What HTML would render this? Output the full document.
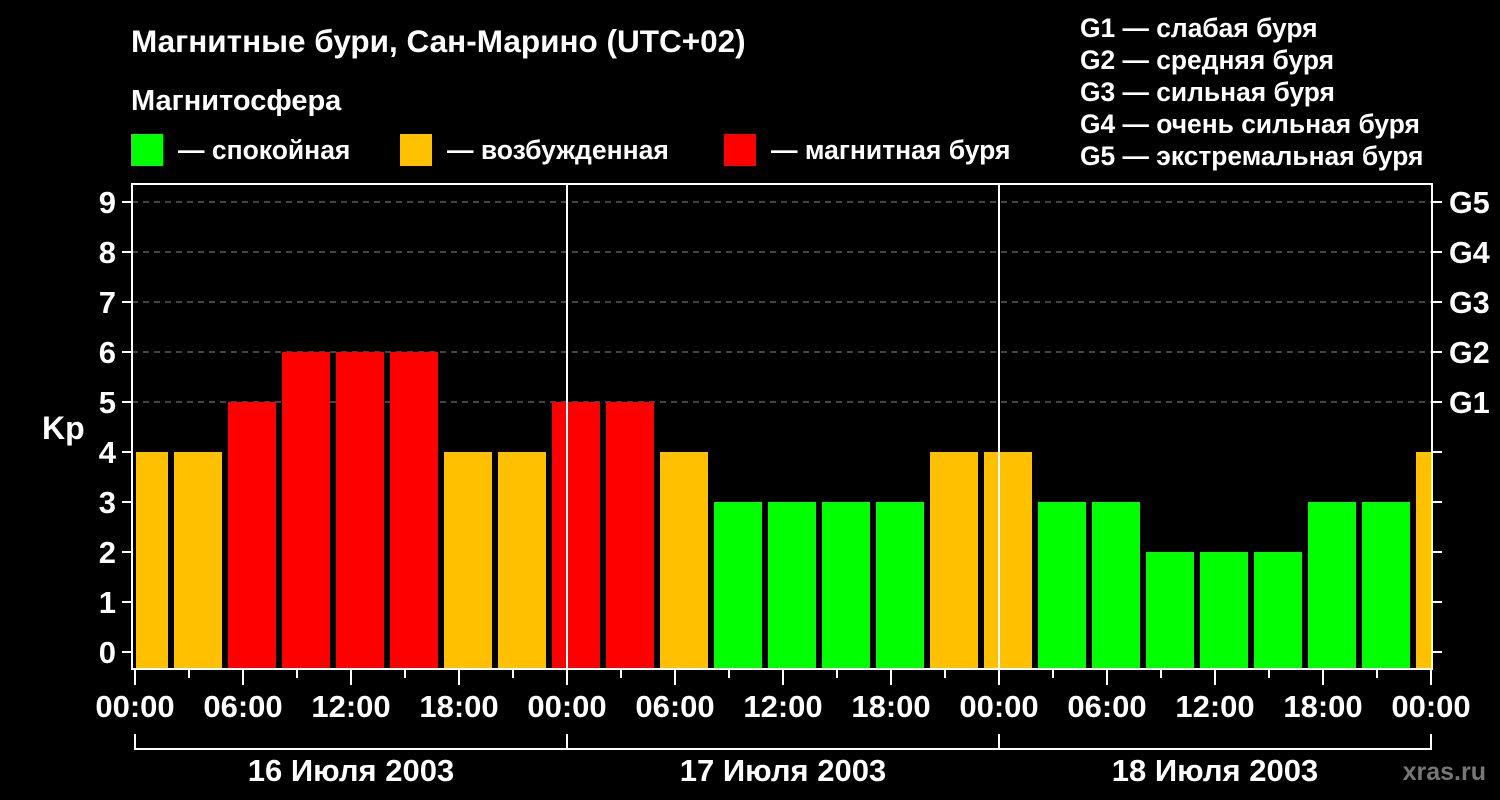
<!DOCTYPE html>
<html><head><meta charset="utf-8"><style>
html,body{margin:0;padding:0;background:#000;width:1500px;height:800px;overflow:hidden}
svg{display:block}
text{font-family:"Liberation Sans",sans-serif;font-weight:bold;fill:#fff}
</style></head><body>
<svg width="1500" height="800" xmlns="http://www.w3.org/2000/svg">
<rect width="1500" height="800" fill="#000"/>
<text x="131" y="52" font-size="31.5">Магнитные бури, Сан-Марино (UTC+02)</text>
<text x="131" y="110" font-size="29">Магнитосфера</text>
<rect x="131" y="134" width="32" height="32" fill="#00ff00"/>
<text x="178" y="159" font-size="26.5">— спокойная</text>
<rect x="400" y="134" width="32" height="32" fill="#ffc000"/>
<text x="447" y="159" font-size="26.5">— возбужденная</text>
<rect x="724" y="134" width="32" height="32" fill="#ff0000"/>
<text x="771" y="159" font-size="26.5">— магнитная буря</text>
<g font-size="26.4">
<text x="1080" y="37">G1 — слабая буря</text>
<text x="1080" y="69">G2 — средняя буря</text>
<text x="1080" y="101">G3 — сильная буря</text>
<text x="1080" y="133">G4 — очень сильная буря</text>
<text x="1080" y="165">G5 — экстремальная буря</text>
</g>
<g stroke="#888" stroke-width="1" stroke-dasharray="6,5">
<line x1="132" y1="202" x2="1432" y2="202"/>
<line x1="132" y1="252" x2="1432" y2="252"/>
<line x1="132" y1="302" x2="1432" y2="302"/>
<line x1="132" y1="352" x2="1432" y2="352"/>
<line x1="132" y1="402" x2="1432" y2="402"/>
</g>
<g>
<rect x="136" y="452" width="32" height="216" fill="#ffc000"/>
<rect x="174" y="452" width="48" height="216" fill="#ffc000"/>
<rect x="228" y="402" width="48" height="266" fill="#ff0000"/>
<rect x="282" y="352" width="48" height="316" fill="#ff0000"/>
<rect x="336" y="352" width="48" height="316" fill="#ff0000"/>
<rect x="390" y="352" width="48" height="316" fill="#ff0000"/>
<rect x="444" y="452" width="48" height="216" fill="#ffc000"/>
<rect x="498" y="452" width="48" height="216" fill="#ffc000"/>
<rect x="552" y="402" width="48" height="266" fill="#ff0000"/>
<rect x="606" y="402" width="48" height="266" fill="#ff0000"/>
<rect x="660" y="452" width="48" height="216" fill="#ffc000"/>
<rect x="714" y="502" width="48" height="166" fill="#00ff00"/>
<rect x="768" y="502" width="48" height="166" fill="#00ff00"/>
<rect x="822" y="502" width="48" height="166" fill="#00ff00"/>
<rect x="876" y="502" width="48" height="166" fill="#00ff00"/>
<rect x="930" y="452" width="48" height="216" fill="#ffc000"/>
<rect x="984" y="452" width="48" height="216" fill="#ffc000"/>
<rect x="1038" y="502" width="48" height="166" fill="#00ff00"/>
<rect x="1092" y="502" width="48" height="166" fill="#00ff00"/>
<rect x="1146" y="552" width="48" height="116" fill="#00ff00"/>
<rect x="1200" y="552" width="48" height="116" fill="#00ff00"/>
<rect x="1254" y="552" width="48" height="116" fill="#00ff00"/>
<rect x="1308" y="502" width="48" height="166" fill="#00ff00"/>
<rect x="1362" y="502" width="48" height="166" fill="#00ff00"/>
<rect x="1416" y="452" width="15" height="216" fill="#ffc000"/>
</g>
<g stroke="#fff" stroke-width="2" fill="none">
<rect x="132" y="184" width="1300" height="485"/>
<line x1="567" y1="184" x2="567" y2="669"/>
<line x1="999" y1="184" x2="999" y2="669"/>
</g>
<g stroke="#fff" stroke-width="2">
<line x1="122" y1="202" x2="132" y2="202"/><line x1="122" y1="252" x2="132" y2="252"/>
<line x1="122" y1="302" x2="132" y2="302"/><line x1="122" y1="352" x2="132" y2="352"/>
<line x1="122" y1="402" x2="132" y2="402"/><line x1="122" y1="452" x2="132" y2="452"/>
<line x1="122" y1="502" x2="132" y2="502"/><line x1="122" y1="552" x2="132" y2="552"/>
<line x1="122" y1="602" x2="132" y2="602"/><line x1="122" y1="652" x2="132" y2="652"/>
<line x1="1432" y1="202" x2="1442" y2="202"/><line x1="1432" y1="252" x2="1442" y2="252"/>
<line x1="1432" y1="302" x2="1442" y2="302"/><line x1="1432" y1="352" x2="1442" y2="352"/>
<line x1="1432" y1="402" x2="1442" y2="402"/><line x1="1432" y1="452" x2="1442" y2="452"/>
<line x1="1432" y1="502" x2="1442" y2="502"/><line x1="1432" y1="552" x2="1442" y2="552"/>
<line x1="1432" y1="602" x2="1442" y2="602"/><line x1="1432" y1="652" x2="1442" y2="652"/>
</g>
<g stroke="#fff" stroke-width="2">
<line x1="135" y1="670" x2="135" y2="685"/><line x1="189" y1="670" x2="189" y2="678"/>
<line x1="243" y1="670" x2="243" y2="685"/><line x1="297" y1="670" x2="297" y2="678"/>
<line x1="351" y1="670" x2="351" y2="685"/><line x1="405" y1="670" x2="405" y2="678"/>
<line x1="459" y1="670" x2="459" y2="685"/><line x1="513" y1="670" x2="513" y2="678"/>
<line x1="567" y1="670" x2="567" y2="685"/><line x1="621" y1="670" x2="621" y2="678"/>
<line x1="675" y1="670" x2="675" y2="685"/><line x1="729" y1="670" x2="729" y2="678"/>
<line x1="783" y1="670" x2="783" y2="685"/><line x1="837" y1="670" x2="837" y2="678"/>
<line x1="891" y1="670" x2="891" y2="685"/><line x1="945" y1="670" x2="945" y2="678"/>
<line x1="999" y1="670" x2="999" y2="685"/><line x1="1053" y1="670" x2="1053" y2="678"/>
<line x1="1107" y1="670" x2="1107" y2="685"/><line x1="1161" y1="670" x2="1161" y2="678"/>
<line x1="1215" y1="670" x2="1215" y2="685"/><line x1="1269" y1="670" x2="1269" y2="678"/>
<line x1="1323" y1="670" x2="1323" y2="685"/><line x1="1377" y1="670" x2="1377" y2="678"/>
<line x1="1431" y1="670" x2="1431" y2="685"/>
<polyline points="135,734 135,749 1431,749 1431,734" fill="none"/>
<line x1="567" y1="734" x2="567" y2="749"/>
<line x1="999" y1="734" x2="999" y2="749"/>
</g>
<g font-size="31" text-anchor="end">
<text x="116" y="213">9</text><text x="116" y="263">8</text><text x="116" y="313">7</text>
<text x="116" y="363">6</text><text x="116" y="413">5</text><text x="116" y="463">4</text>
<text x="116" y="513">3</text><text x="116" y="563">2</text><text x="116" y="613">1</text>
<text x="116" y="663">0</text>
</g>
<text x="42" y="439" font-size="32">Kp</text>
<g font-size="30.5">
<text x="1449" y="213">G5</text><text x="1449" y="263">G4</text><text x="1449" y="313">G3</text>
<text x="1449" y="363">G2</text><text x="1449" y="413">G1</text>
</g>
<g font-size="31" text-anchor="middle">
<text x="135" y="717">00:00</text><text x="243" y="717">06:00</text><text x="351" y="717">12:00</text>
<text x="459" y="717">18:00</text><text x="567" y="717">00:00</text><text x="675" y="717">06:00</text>
<text x="783" y="717">12:00</text><text x="891" y="717">18:00</text><text x="999" y="717">00:00</text>
<text x="1107" y="717">06:00</text><text x="1215" y="717">12:00</text><text x="1323" y="717">18:00</text>
<text x="1431" y="717">00:00</text>
<text x="351" y="781">16 Июля 2003</text>
<text x="783" y="781">17 Июля 2003</text>
<text x="1215" y="781">18 Июля 2003</text>
</g>
<text x="1486" y="780" font-size="25" text-anchor="end" style="fill:#777">xras.ru</text>
</svg>
</body></html>
